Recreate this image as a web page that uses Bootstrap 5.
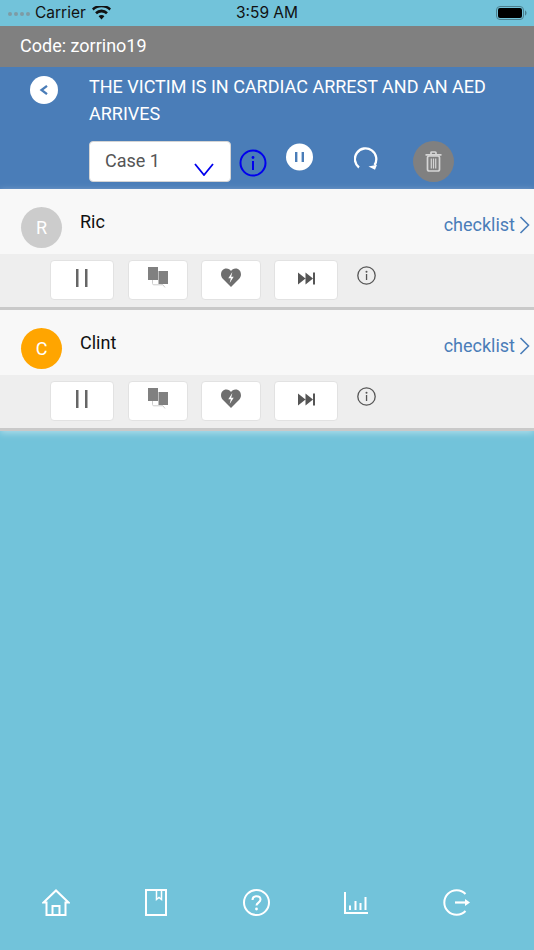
<!DOCTYPE html>
<html lang="en">
<head>
    <meta charset="UTF-8">
    <meta name="viewport" content="width=device-width, initial-scale=1.0">
    <title>Code</title>
    <link href="https://cdn.jsdelivr.net/npm/bootstrap@5.3.0/dist/css/bootstrap.min.css" rel="stylesheet">
    <style>
        body { background-color: #72c3da; font-family: Roboto, sans-serif; min-height: 950px; }
        .app-page { min-height: 950px; }
        .status-bar { height: 26px; padding: 0 7px 0 8px; font-family: Inter, "Liberation Sans", sans-serif; font-size: 15.5px; color: #111; position: relative; }
        .status-time { position: absolute; left: 0; right: 0; top: 3px; text-align: center; line-height: 20px; }
        .status-carrier { margin-left: 5px; margin-right: 6px; }
        .status-dots { gap: 2px; margin-top: 2px; }
        .status-dots i { width: 4px; height: 4px; border-radius: 50%; background: #7e9ba4; display: block; }
        .code-bar { height: 41px; background: #808080; color: #fff; font-size: 18px; padding: 0 20px; line-height: 40px; }
        .case-head { height: 122px; background: #4a7db8; color: #fff; }
        .back-col { width: 89px; padding: 9px 0 0 30px; flex: none; }
        .round-btn { width: 28px; height: 28px; line-height: 0; background: none; }
        .case-title { font-size: 18px; line-height: 27px; padding-top: 6px; height: 74px; width: 420px; }
        .case-select { width: 142px; height: 41px; background: #fff; border: 1px solid #d4d4d4; border-radius: 4px; color: #555; font-size: 18px; padding: 0 0 0 15px; line-height: 37px; position: relative; }
        .case-select svg { position: absolute; right: 16px; top: 21px; }
        .info-blue { margin: 8px 0 0 8px; }
        .pause-round { margin: 2px 0 0 19px; }
        .reload-ic { margin: 5px 0 0 41px; }
        .trash-round { width: 41px; height: 41px; border-radius: 50%; background: #808080; margin: 0 0 0 35px; }
        .person-head { height: 65px; background: #f8f8f8; position: relative; }
        .avatar { width: 41px; height: 41px; border-radius: 50%; color: #fff; font-size: 18px; margin: 18px 0 0 21px; flex: none; }
        .avatar-grey { background: #ccc; }
        .avatar-orange { background: #ffa500; }
        .person-name { font-size: 18px; color: #111; margin: 20px 0 0 18px; line-height: 26px; }
        .checklist { color: #4a7db8; font-size: 18px; text-decoration: none; margin: 24px 4px 0 auto; line-height: 24px; height: 24px; }
        .checklist svg { margin-left: 4px; vertical-align: -3px; }
        .person-actions { height: 53px; background: #eee; padding: 6px 0 0 50px; }
        .action-btn { height: 40px; background: #fff; border: 1px solid #e2e2e2; border-radius: 4px; padding: 0; }
        .act-pause { width: 64px; margin-right: 14px; }
        .act-pads { width: 60px; margin-right: 13px; }
        .act-aed { width: 60px; margin-right: 13px; }
        .act-next { width: 64px; }
        .act-pause svg { margin-bottom: 4px; }
        .act-next svg { margin-bottom: 4px; }
        .act-pads svg { margin-top: 6px; }
        .act-aed svg { margin-top: 7px; }
        .info-small { margin: 6px 0 0 19px; }
        .person-line { height: 3px; background: #c9c9c9; }
        .people-list { box-shadow: 0 2px 7px rgba(255,255,255,.45); }
        .bottom-nav { height: 61px; padding: 0 0 0 6px; }
        .nav-cell { width: 100px; }
        .nav-chart { margin-top: 3px; margin-left: -1px; }
    </style>
</head>
<body class="m-0">
<div class="app-page d-flex flex-column">

    <div class="status-bar d-flex align-items-center">
        <div class="status-dots d-flex"><i></i><i></i><i></i><i></i></div>
        <span class="status-carrier">Carrier</span>
        <svg width="19" height="14" viewBox="0 0 19 14"><path d="M9.500 13.500 6.600 10.200a4 4 0 0 1 5.800 0zM4.900 8.300 3.100 6.200a9.200 9.200 0 0 1 12.800 0l-1.800 2.100a6.600 6.600 0 0 0-9.200 0zM1.600 4.500 0 2.600a13.800 13.800 0 0 1 19 0l-1.600 1.900a11.400 11.400 0 0 0-15.800 0z" fill="#111"/></svg>
        <span class="status-time">3:59 AM</span>
        <svg class="ms-auto" width="31" height="14" viewBox="0 0 31 14"><rect x=".5" y=".5" width="27" height="13" rx="3.500" fill="none" stroke="#4c7f8e"/><rect x="2" y="2" width="24" height="10" rx="2" fill="#000"/><path d="M29 4.500c1 .3 1.500 1.300 1.500 2.500s-.5 2.200-1.500 2.500z" fill="#4c7f8e"/></svg>
    </div>

    <div class="code-bar">Code: zorrino19</div>

    <div class="case-head d-flex">
        <div class="back-col">
            <button class="round-btn border-0 p-0 d-block">
                <svg width="28" height="28" viewBox="0 0 28 28"><circle cx="14" cy="14" r="14" fill="#fff"/><path d="M17 9.800 11.500 14 17 18.200" fill="none" stroke="#4a7db8" stroke-width="2.300"/></svg>
            </button>
        </div>
        <div>
            <div class="case-title">THE VICTIM IS IN CARDIAC ARREST AND AN AED ARRIVES</div>
            <div class="d-flex align-items-start">
                <div class="case-select">Case 1
                    <svg width="20" height="13" viewBox="0 0 20 13"><path d="M1 1l9 11 9-11" fill="none" stroke="#0000ee" stroke-width="1.800"/></svg>
                </div>
                <svg class="info-blue" width="28" height="28" viewBox="0 0 28 28"><circle cx="14" cy="14" r="12.500" fill="none" stroke="#0000ee" stroke-width="2"/><rect x="13" y="12" width="2" height="9" fill="#0000ee"/><circle cx="14" cy="8.500" r="1.400" fill="#0000ee"/></svg>
                <svg class="pause-round" width="27" height="28" viewBox="0 0 27 28"><circle cx="13.500" cy="14" r="13.500" fill="#fff"/><rect x="9" y="9" width="2.400" height="10" fill="#4a7db8"/><rect x="15.600" y="9" width="2.400" height="10" fill="#4a7db8"/></svg>
                <svg class="reload-ic" width="24" height="24" viewBox="0 0 24 24"><path d="M5 21.500A10.700 10.700 0 1 1 20.500 19" fill="none" stroke="#fff" stroke-width="2.300"/><path d="M14.500 20.500 23 18.800l-2 5z" fill="#fff"/></svg>
                <div class="trash-round d-flex align-items-center justify-content-center">
                    <svg width="17" height="21" viewBox="0 0 17 21"><path d="M.5 3.800h16M6 3.500V1.800c0-.5.300-.8.800-.8h3.400c.5 0 .8.300.8.800v1.700" fill="none" stroke="#d5d5d5" stroke-width="1.700"/><rect x="2.500" y="5" width="12" height="15" rx="1.800" fill="none" stroke="#d5d5d5" stroke-width="1.700"/><path d="M6.300 7.500v10M8.500 7.500v10M10.700 7.500v10" stroke="#d5d5d5" stroke-width="1.200"/></svg>
                </div>
            </div>
        </div>
    </div>

    <div class="people-list">
        <!-- Ric -->
        <div class="person-head d-flex">
            <div class="avatar avatar-grey d-flex align-items-center justify-content-center">R</div>
            <div class="person-name">Ric</div>
            <a class="checklist" href="#">checklist<svg width="11" height="18" viewBox="0 0 11 18"><path d="M1.500 1l8 8-8 8" fill="none" stroke="#4a7db8" stroke-width="1.600"/></svg></a>
        </div>
        <div class="person-actions d-flex align-items-start">
            <button class="action-btn act-pause d-flex align-items-center justify-content-center">
                <svg width="12" height="18" viewBox="0 0 12 18"><rect x="0" y="0" width="2.500" height="18" fill="#666"/><rect x="9" y="0" width="2.500" height="18" fill="#666"/></svg>
            </button>
            <button class="action-btn act-pads d-flex align-items-start justify-content-center">
                <svg width="20" height="21" viewBox="0 0 20 21"><rect x="0" y="0" width="10" height="13" fill="#808080"/><rect x="10.500" y="4" width="9.500" height="13" fill="#808080"/><path d="M4.500 13v3.500c0 .8.500 1.300 1.300 1.300H15l2 2.700" fill="none" stroke="#ccc" stroke-width="1"/><path d="M14 17v1" stroke="#ccc" stroke-width="1"/></svg>
            </button>
            <button class="action-btn act-aed d-flex align-items-start justify-content-center">
                <svg width="20" height="19" viewBox="0 0 20 19"><path d="M10 19 1.800 10.800C-1.800 6.800.4 .5 5.400 .5 7.600 .5 9 1.600 10 3 11 1.600 12.400 .5 14.600 .5c5 0 7.200 6.300 3.600 10.300z" fill="#6e6e6e"/><path d="M11.300 4 7.300 10.200h2.500L8.700 15l4-6.300h-2.500z" fill="#fff"/></svg>
            </button>
            <button class="action-btn act-next d-flex align-items-center justify-content-center">
                <svg width="17" height="13" viewBox="0 0 17 13"><path d="M0 .5v12l7.500-6zM7.500 .5v12l7.500-6z" fill="#555"/><rect x="15" y=".5" width="2" height="12" fill="#555"/></svg>
            </button>
            <svg class="info-small" width="19" height="19" viewBox="0 0 19 19"><circle cx="9.500" cy="9.500" r="8.700" fill="none" stroke="#555" stroke-width="1.300"/><rect x="8.900" y="8" width="1.300" height="6" fill="#555"/><circle cx="9.500" cy="5.700" r="1" fill="#555"/></svg>
        </div>
        <div class="person-line"></div>

        <!-- Clint -->
        <div class="person-head d-flex">
            <div class="avatar avatar-orange d-flex align-items-center justify-content-center">C</div>
            <div class="person-name">Clint</div>
            <a class="checklist" href="#">checklist<svg width="11" height="18" viewBox="0 0 11 18"><path d="M1.500 1l8 8-8 8" fill="none" stroke="#4a7db8" stroke-width="1.600"/></svg></a>
        </div>
        <div class="person-actions d-flex align-items-start">
            <button class="action-btn act-pause d-flex align-items-center justify-content-center">
                <svg width="12" height="18" viewBox="0 0 12 18"><rect x="0" y="0" width="2.500" height="18" fill="#666"/><rect x="9" y="0" width="2.500" height="18" fill="#666"/></svg>
            </button>
            <button class="action-btn act-pads d-flex align-items-start justify-content-center">
                <svg width="20" height="21" viewBox="0 0 20 21"><rect x="0" y="0" width="10" height="13" fill="#808080"/><rect x="10.500" y="4" width="9.500" height="13" fill="#808080"/><path d="M4.500 13v3.500c0 .8.500 1.300 1.300 1.300H15l2 2.700" fill="none" stroke="#ccc" stroke-width="1"/><path d="M14 17v1" stroke="#ccc" stroke-width="1"/></svg>
            </button>
            <button class="action-btn act-aed d-flex align-items-start justify-content-center">
                <svg width="20" height="19" viewBox="0 0 20 19"><path d="M10 19 1.800 10.800C-1.800 6.800.4 .5 5.400 .5 7.600 .5 9 1.600 10 3 11 1.600 12.400 .5 14.600 .5c5 0 7.200 6.300 3.600 10.300z" fill="#6e6e6e"/><path d="M11.300 4 7.300 10.200h2.500L8.700 15l4-6.300h-2.500z" fill="#fff"/></svg>
            </button>
            <button class="action-btn act-next d-flex align-items-center justify-content-center">
                <svg width="17" height="13" viewBox="0 0 17 13"><path d="M0 .5v12l7.500-6zM7.500 .5v12l7.500-6z" fill="#555"/><rect x="15" y=".5" width="2" height="12" fill="#555"/></svg>
            </button>
            <svg class="info-small" width="19" height="19" viewBox="0 0 19 19"><circle cx="9.500" cy="9.500" r="8.700" fill="none" stroke="#555" stroke-width="1.300"/><rect x="8.900" y="8" width="1.300" height="6" fill="#555"/><circle cx="9.500" cy="5.700" r="1" fill="#555"/></svg>
        </div>
        <div class="person-line"></div>
    </div>

    <!-- bottom menu -->
    <div class="bottom-nav d-flex mt-auto">
        <div class="nav-cell d-flex justify-content-center">
            <svg width="28" height="27" viewBox="0 0 28 27"><path d="M1.500 13.500 14 1.500l12.500 12h-3V26H4.500V13.500zM10.500 26v-9h7v9" fill="none" stroke="#fff" stroke-width="2"/></svg>
        </div>
        <div class="nav-cell d-flex justify-content-center">
            <svg width="22" height="27" viewBox="0 0 22 27"><rect x="1" y="1" width="20" height="25" fill="none" stroke="#fff" stroke-width="2"/><path d="M11.500 1v9.500l2.500-2 2.500 2V1" fill="none" stroke="#fff" stroke-width="1.500"/></svg>
        </div>
        <div class="nav-cell d-flex justify-content-center">
            <svg width="27" height="27" viewBox="0 0 27 27"><circle cx="13.500" cy="13.500" r="12.500" fill="none" stroke="#fff" stroke-width="2"/><path d="M9.500 11C9.500 8.500 11.300 7.200 13.500 7.200s4 1.300 4 3.400c0 3-4 3-4 6" fill="none" stroke="#fff" stroke-width="2"/><circle cx="13.500" cy="20" r="1.400" fill="#fff"/></svg>
        </div>
        <div class="nav-cell d-flex justify-content-center">
            <svg class="nav-chart" width="24" height="22" viewBox="0 0 24 22"><path d="M1 0v21h23" fill="none" stroke="#fff" stroke-width="2"/><path d="M6 13.500v4.500M11.500 9v9M16.500 11v7M21.500 5v13" stroke="#fff" stroke-width="2"/></svg>
        </div>
        <div class="nav-cell d-flex justify-content-center">
            <svg width="27" height="27" viewBox="0 0 27 27"><path d="M22.500 5A12.300 12.300 0 1 0 22.500 22" fill="none" stroke="#fff" stroke-width="2"/><path d="M12 13.500h12" stroke="#fff" stroke-width="2.200"/><path d="M22 10l5 3.500-5 3.500z" fill="#fff"/></svg>
        </div>
    </div>
</div>
<script src="https://cdn.jsdelivr.net/npm/bootstrap@5.3.0/dist/js/bootstrap.bundle.min.js"></script>
</body>
</html>
